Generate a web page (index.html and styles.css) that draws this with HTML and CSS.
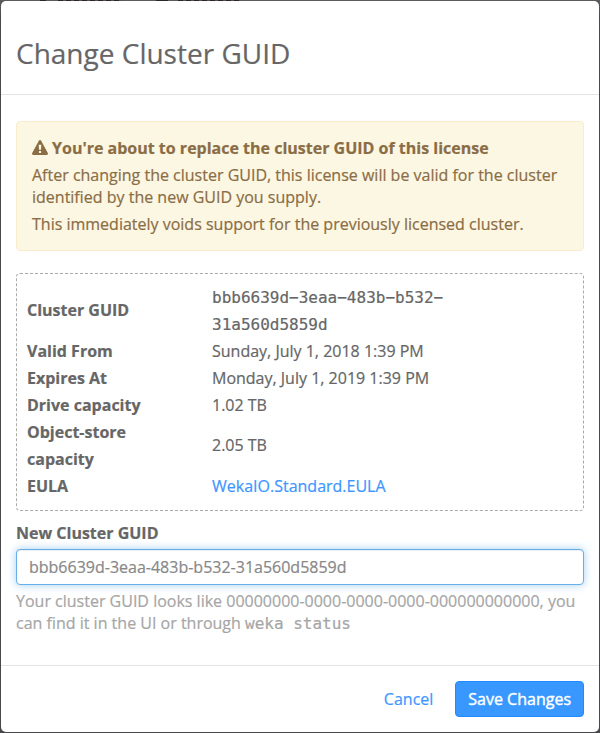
FILE: index.html
```html
<!DOCTYPE html>
<html lang="en">
<head>
<meta charset="utf-8">
<title>Change Cluster GUID</title>
<link rel="stylesheet" href="styles.css">
</head>
<body>
<main class="modal">
  <header class="modal-header"><h1>Change Cluster GUID</h1></header>
  <section class="modal-body">
    <div class="alert">
      <p class="alert-title"><svg class="warning" viewBox="0 0 16 15" aria-hidden="true"><path fill-rule="evenodd" d="M8 0Q8.700 0 9 .6L15.800 13Q16.100 13.700 15.800 14.300Q15.400 15 14.700 15H1.300Q.6 15 .2 14.300Q-.1 13.700 .2 13L7 .6Q7.300 0 8 0ZM6.700 4.700L7 9.800H9L9.300 4.700ZM6.900 10.900V13H9.100V10.900Z"/></svg>You're about to replace the cluster GUID of this license</p>
      <p>After changing the cluster GUID, this license will be valid for the cluster identified by the new GUID you supply.</p>
      <p>This immediately voids support for the previously licensed cluster.</p>
    </div>
    <div class="details">
      <table>
        <tr><th class="tall">Cluster GUID</th><td class="mono">bbb6639d−3eaa−483b−b532−<br>31a560d5859d</td></tr>
        <tr><th>Valid From</th><td>Sunday, July 1, 2018 1:39 PM</td></tr>
        <tr><th>Expires At</th><td>Monday, July 1, 2019 1:39 PM</td></tr>
        <tr><th>Drive capacity</th><td>1.02 TB</td></tr>
        <tr><th>Object-store<br>capacity</th><td class="tall">2.05 TB</td></tr>
        <tr><th>EULA</th><td><a href="#">WekaIO.Standard.EULA</a></td></tr>
      </table>
    </div>
    <label for="guid">New Cluster GUID</label>
    <input id="guid" type="text" value="bbb6639d-3eaa-483b-b532-31a560d5859d">
    <p class="help">Your cluster GUID looks like 00000000-0000-0000-0000-000000000000, you can find it in the UI or through <span class="mono">weka status</span></p>
  </section>
  <footer class="modal-footer">
    <button class="btn btn-link">Cancel</button>
    <button class="btn btn-primary">Save Changes</button>
  </footer>
</main>
</body>
</html>
```
FILE: styles.css
```css
* { box-sizing: border-box; }
html { height: 100%; }
body {
  height: 100%;
  margin: 0;
  padding: 1px;
  background:
    repeating-linear-gradient(90deg, #2c2626 0 5px, #565456 5px 8px) 58px 0 / 64px 1px no-repeat,
    repeating-linear-gradient(90deg, #2c2626 0 5px, #565456 5px 8px) 178px 0 / 62px 1px no-repeat,
    linear-gradient(#2c2626, #2c2626) 40px 0 / 6px 1px no-repeat,
    linear-gradient(#2c2626, #2c2626) 156px 0 / 12px 1px no-repeat,
    linear-gradient(#5c5c5e, #48484a 20px);
  font: 16px/22px "Open Sans", sans-serif;
  color: #666;
  -webkit-text-stroke: .2px currentColor;
}
p, h1 { margin: 0; }
a { color: #3d96ff; text-decoration: none; }
.mono { font-family: "DejaVu Sans Mono", monospace; }
.modal {
  display: flex;
  flex-direction: column;
  height: 731px;
  background: #fff;
  border-radius: 5px;
}
.modal-header {
  height: 94px;
  padding: 31px 15px 0;
  border-bottom: 1px solid #e5e5e5;
}
.modal-header h1 {
  font-size: 28px;
  line-height: 42px;
  font-weight: 400;
}
.modal-body { flex: 1; padding: 26px 15px 0; }
.alert {
  height: 130px;
  padding: 15px;
  background: #fcf7e3;
  border: 1px solid #faebcc;
  border-radius: 4px;
  color: #8a6d45;
}
.alert p + p { margin-top: 5px; }
.alert-title { font-weight: 700; }
.warning {
  width: 16px;
  height: 15px;
  margin-right: 4px;
  vertical-align: -1px;
  fill: currentColor;
}
.details {
  height: 238px;
  margin-top: 22px;
  padding: 10px;
  border: 1px dashed #aaa;
  border-radius: 4px;
}
table { width: 100%; border-collapse: collapse; table-layout: fixed; line-height: 27px; }
th { width: 185px; padding: 0; text-align: left; font-weight: 700; }
td { padding: 0; }
.tall { padding-bottom: 2px; }
label { display: block; margin: 11px 0 5px; font-weight: 700; }
input {
  display: block;
  width: 100%;
  height: 36px;
  padding: 6px 12px;
  border: 1px solid #66afe9;
  border-radius: 4px;
  outline: 0;
  font: inherit;
  color: #888;
  -webkit-text-stroke: inherit;
  box-shadow: inset 0 1px 1px rgba(0, 0, 0, .075), 0 0 8px rgba(102, 175, 233, .6);
}
.help { margin-top: 5px; color: #a6a6a6; }
.modal-footer {
  display: flex;
  justify-content: flex-end;
  gap: 9px;
  height: 67px;
  padding: 15px;
  border-top: 1px solid #e5e5e5;
}
.btn {
  height: 36px;
  padding: 0 12px;
  border: 1px solid transparent;
  border-radius: 4px;
  background: none;
  font: inherit;
}
.btn-link { color: #3d96ff; }
.btn-primary { background: #3998ff; border-color: #208bff; color: #fff; -webkit-text-stroke: .4px #fff; }
```
